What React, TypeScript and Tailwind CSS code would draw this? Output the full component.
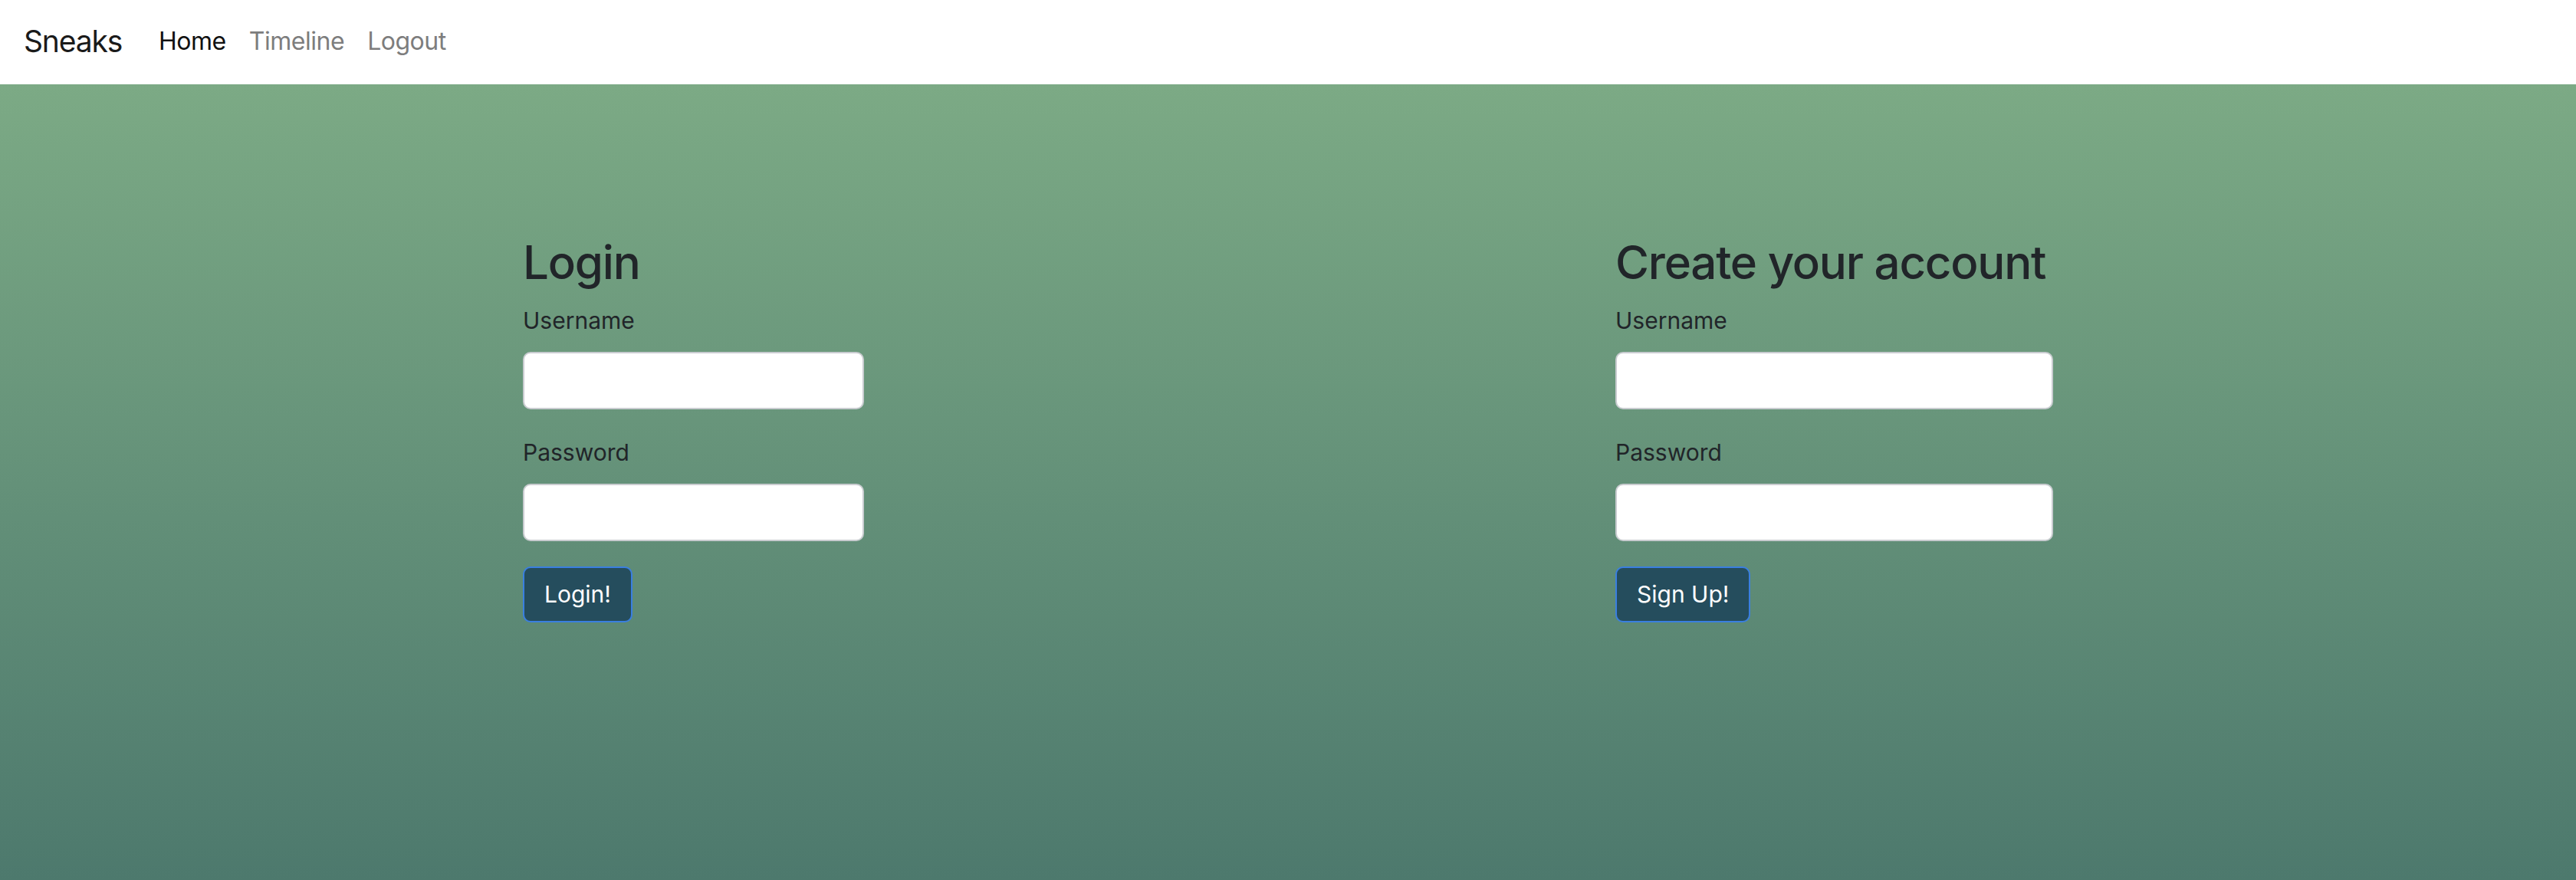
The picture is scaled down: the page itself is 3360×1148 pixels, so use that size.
const links = [
  { label: "Home", active: true },
  { label: "Timeline", active: false },
  { label: "Logout", active: false },
];

function Navbar() {
  return (
    <nav className="flex h-[110px] items-center bg-white pb-[2px] pl-[31px]">
      <a
        className="mr-[33px] text-[39px] leading-[1.21] tracking-[-0.03em] text-[#1a1a1a]"
        href="#"
      >
        Sneaks
      </a>
      <ul className="flex items-center">
        {links.map((link) => (
          <li key={link.label}>
            <a
              href="#"
              className={
                link.active
                  ? "block px-[15px] text-[32px] leading-[1.21] tracking-[-0.015em] text-[#111]"
                  : "block px-[15px] text-[32px] leading-[1.21] tracking-[-0.015em] text-[#7d7d7d]"
              }
            >
              {link.label}
            </a>
          </li>
        ))}
      </ul>
    </nav>
  );
}

function Field({ label }: { label: string }) {
  return (
    <div className="flex flex-col">
      <label className="mb-[18px] text-[30px] leading-[45px] text-[#212529]">{label}</label>
      <input
        type={label === "Password" ? "password" : "text"}
        className="h-[75px] w-full rounded-[10px] border-2 border-[#c9ccd0] bg-white px-[24px] text-[30px] outline-none"
      />
    </div>
  );
}

function AuthForm({ title, button, width }: { title: string; button: string; width: string }) {
  return (
    <form className={`flex flex-col ${width}`} onSubmit={(e) => e.preventDefault()}>
      <h2 className="whitespace-nowrap text-[60px] font-medium leading-[72px] tracking-[-0.02em] text-[#212529]">
        {title}
      </h2>
      <div className="mt-[18px] flex flex-col gap-[34px]">
        <Field label="Username" />
        <Field label="Password" />
      </div>
      <div className="mt-[33px]">
        <button
          type="submit"
          className="h-[73px] rounded-[10px] border-2 border-[#3a7fe0] bg-[#254d5d] px-[26px] text-[30px] text-white"
        >
          {button}
        </button>
      </div>
    </form>
  );
}

export default function App() {
  return (
    <div className="flex min-h-screen flex-col font-['Inter','Liberation_Sans',sans-serif]">
      <Navbar />
      <main className="flex flex-1 items-start gap-[980px] bg-linear-to-b from-[#7caa85] to-[#4d796d] pl-[682px] pt-[196px]">
        <AuthForm title="Login" button="Login!" width="w-[445px]" />
        <AuthForm title="Create your account" button="Sign Up!" width="w-[571px]" />
      </main>
    </div>
  );
}
